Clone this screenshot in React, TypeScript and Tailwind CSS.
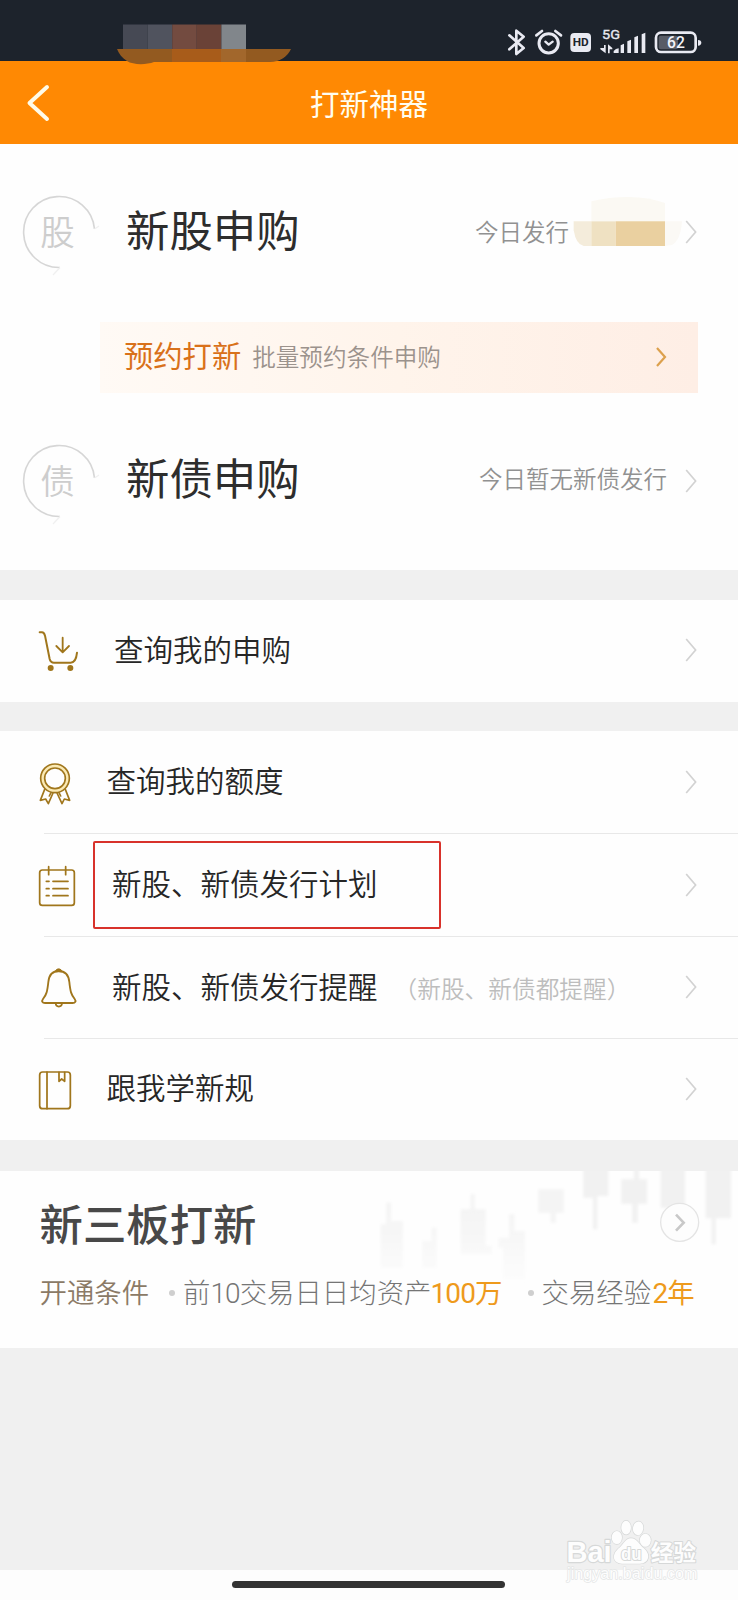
import type { ReactNode } from "react";

const GOLD = "#a0761c";

function Chevron({ className = "text-[#d2d2d2]", small = false }: { className?: string; small?: boolean }) {
  return (
    <svg width="12" height="24" viewBox="0 0 12 24" fill="none" className={`shrink-0 ${className}`}>
      <path d={small ? "M2 3L10 12L2 21" : "M1.2 1L10.6 12L1.2 23"} stroke="currentColor" strokeWidth={small ? 2.2 : 1.7} />
    </svg>
  );
}

function StatusBar() {
  return (
    <div className="relative h-[61px] shrink-0 bg-[#1d232c]">
      <svg width="176" height="42" viewBox="0 0 176 42" className="absolute left-[116px] top-[24px] z-10">
        <rect x="7" y="0.5" width="24.6" height="24.5" fill="#464954" />
        <rect x="31.6" y="0.5" width="24.6" height="24.5" fill="#50535e" />
        <rect x="56.2" y="0.5" width="24.6" height="24.5" fill="#734b40" />
        <rect x="80.8" y="0.5" width="24.6" height="24.5" fill="#6a4237" />
        <rect x="105.4" y="0.5" width="24.6" height="24.5" fill="#81868b" />
        <path d="M1 25H175C172 32 164 38 154 38H38C30 41 17 41 11 37C6 34 3 30 1 25Z" fill="#935a20" />
        <path d="M56 25H105V38H56Z" fill="#a85c1a" />
        <path d="M105 25H130V38H105Z" fill="#a2672c" />
      </svg>
      <svg width="200" height="34" viewBox="0 0 600 102" fill="none" stroke="#e9eaf2" className="absolute left-[505px] top-[26px]">
        <path d="M13 28L56 66L34 84V14L56 32L13 70" strokeWidth="8" strokeLinejoin="round" strokeLinecap="round" />
        <circle cx="131" cy="52" r="29" strokeWidth="9" />
        <path d="M121 47L131 56L143 47" strokeWidth="7" strokeLinecap="round" strokeLinejoin="round" />
        <path d="M94 28L111 15M168 28L151 15" strokeWidth="8" strokeLinecap="round" />
        <rect x="196" y="21" width="62" height="57" rx="12" fill="#e9eaf2" stroke="none" />
        <text x="203" y="61" fontSize="33" fontWeight="700" fontFamily="Roboto, sans-serif" fill="#1d232c" stroke="none" textLength="48" lengthAdjust="spacingAndGlyphs">HD</text>
        <text x="291" y="39" fontSize="41" fontFamily="Roboto, sans-serif" fill="#e9eaf2" stroke="#e9eaf2" strokeWidth="1" textLength="54" lengthAdjust="spacingAndGlyphs">5G</text>
        <g fill="#e9eaf2" stroke="none">
          <path d="M297 57H302V82L286 70V66H297ZM309 82H314V70H322V66L309 55Z" />
          <path d="M326 75Q332 68 341 67V81H326Z" />
          <path d="M347 58L357 53V81H347ZM367 46L378 41V81H367ZM388 34L399 29V81H388ZM410 25L421 20V81H410Z" />
        </g>
        <rect x="453" y="20" width="119" height="58" rx="15" strokeWidth="8" />
        <rect x="461" y="29" width="58" height="41" rx="6" fill="#585c66" stroke="none" />
        <path d="M579 42C586 42 589 46 589 50C589 54 586 59 579 59Z" fill="#e9eaf2" stroke="none" />
        <text x="513" y="66" textAnchor="middle" fontSize="47" fontWeight="500" fontFamily="Roboto, sans-serif" fill="#f4f4fa" stroke="none">62</text>
      </svg>
    </div>
  );
}

function Badge({ label }: { label: string }) {
  return (
    <div className="relative ml-[22px] flex h-[74px] w-[74px] shrink-0 items-center justify-center">
      <svg width="82" height="90" viewBox="0 0 82 90" fill="none" className="absolute left-0 top-0">
        <path d="M72.5 34A35.5 35.5 0 1 0 38 72.5" stroke="#d6d6d6" strokeWidth="1.6" />
        <path d="M72.5 34L77 31M38 72.5L31 80" stroke="#f0f0f0" strokeWidth="1.2" />
      </svg>
      <span className="mb-[3px] mr-[3px] text-[34.5px] font-[350] leading-none text-[#cdcdcd]">{label}</span>
    </div>
  );
}

function CartIcon() {
  return (
    <>
      <path d="M119 636H126C131 636 133 639 135 646L149 716C151 724 155 727 162 727H212C222 727 229 717 231 697" strokeWidth="6" />
      <path d="M188 652V695M169 677L188 696L207 677" strokeWidth="5.5" />
      <circle cx="152" cy="743" r="9" fill={GOLD} stroke="none" />
      <circle cx="211" cy="743" r="9" fill={GOLD} stroke="none" />
    </>
  );
}

function MedalIcon() {
  return (
    <g strokeWidth="5">
      <circle cx="165" cy="158" r="37" stroke="#fbeab4" strokeWidth="10" />
      <circle cx="165" cy="158" r="43" />
      <circle cx="165" cy="158" r="31" />
      <path d="M134 191L121 224L137 220L145 234L159 202M153 201L148 211M196 191L209 224L193 220L186 234L171 202M177 201L182 211" />
    </g>
  );
}

function PlanIcon() {
  return (
    <g strokeWidth="5.2">
      <rect x="119" y="433" width="104" height="106" rx="8" />
      <path d="M146 423V447M197 423V447" />
      <path d="M139 467H147M159 467H204M139 489H147M159 489H204M139 510H147M159 510H204" />
    </g>
  );
}

function BellIcon() {
  return (
    <>
      <path d="M176 106C157 106 147 120 145 139C142 168 139 178 129 190C124 197 127 202 135 202H218C226 202 229 197 224 190C214 178 211 168 208 139C206 120 196 106 176 106Z" strokeWidth="5.6" />
      <path d="M166 107C168 97 184 97 186 107Z" fill={GOLD} strokeWidth="3" />
      <path d="M167 203C167 216 186 216 186 203" strokeWidth="5" />
    </>
  );
}

function BookIcon() {
  return (
    <g strokeWidth="5.2">
      <rect x="119" y="410" width="92" height="110" rx="9" />
      <path d="M141 410V520M177 411V438L185 431L194 438V411" />
    </g>
  );
}

interface RowProps {
  icon: ReactNode;
  box: string;
  label: string;
  gap: string;
  height: string;
  note?: string;
  divider?: boolean;
  marked?: boolean;
}

function Row({ icon, box, label, gap, height, note, divider, marked }: RowProps) {
  return (
    <div className={`relative flex items-center pl-[38px] pr-[41px] ${height}`}>
      <svg width="42" height="44" viewBox={box} fill="none" stroke={GOLD} strokeLinecap="round" strokeLinejoin="round" className="shrink-0">
        {icon}
      </svg>
      <span className={`mb-[5px] whitespace-nowrap text-[29.5px] font-[350] leading-none text-[#262626] ${gap}`}>{label}</span>
      {note && <span className="ml-[16px] mt-px whitespace-nowrap text-[23.7px] font-[350] leading-none text-[#bdbdbd]">{note}</span>}
      <span className="mb-[2px] ml-auto flex">
        <Chevron />
      </span>
      {divider && <div className="absolute bottom-0 left-[44px] right-0 h-px bg-[#e8e8e8]" />}
      {marked && <div className="absolute left-[93px] top-[7px] h-[88px] w-[348px] rounded-[2px] border-2 border-[#d8322b]" />}
    </div>
  );
}

function Candles() {
  return (
    <svg width="369" height="120" viewBox="0 0 1107 360" className="absolute right-0 top-0">
      <defs>
        <filter id="soft" x="-5%" y="-5%" width="110%" height="110%">
          <feGaussianBlur stdDeviation="5" />
        </filter>
        <linearGradient id="fade" x1="0" y1="70" x2="0" y2="325" gradientUnits="userSpaceOnUse">
          <stop offset="0.2" stopColor="#f4f4f4" />
          <stop offset="1" stopColor="#fcfcfc" />
        </linearGradient>
      </defs>
      <g fill="url(#fade)" filter="url(#soft)">
        <path d="M35 160H52V95H66V150H102V290H35ZM160 210H188V170H203V290H160Z" />
        <path d="M388 200H420V130H436V180H468V325H402V230H388Z" />
        <path d="M275 115H305V70H317V115H350V225H368V250H275Z" />
      </g>
      <g fill="#f1f1f1" filter="url(#soft)">
        <path d="M508 55H584V125H560V155H545V125H508Z" fill="#f4f4f4" />
        <path d="M643 -10H718V75H685V175H672V80H643Z" />
        <path d="M757 25H795V-10H810V25H834V98H806V155H790V98H757Z" />
        <path d="M875 -10H948V110H875Z" />
        <path d="M1010 -10H1086V142H1040V220H1028V142H1010Z" />
      </g>
      <circle cx="932" cy="154" r="57" fill="#fdfdfd" stroke="#e4e4e4" strokeWidth="4" />
      <path d="M921 131L944 155L921 179" fill="none" stroke="#c8c8c8" strokeWidth="8" />
    </svg>
  );
}

function Watermark() {
  return (
    <svg width="138" height="70" viewBox="0 0 402 204" className="absolute left-[565px] top-[1517px]">
      <g stroke="#d6d8d8" fill="#fdfdfd" paintOrder="stroke" strokeLinejoin="round">
        <text x="4" y="132" fontSize="88" fontWeight="700" fontFamily="Liberation Sans, sans-serif" strokeWidth="7" textLength="132" lengthAdjust="spacingAndGlyphs">Bai</text>
        <g strokeWidth="4">
          <ellipse cx="151" cy="60" rx="15" ry="19" />
          <ellipse cx="178" cy="31" rx="14" ry="20" />
          <ellipse cx="213" cy="33" rx="15" ry="20" transform="rotate(8 213 33)" />
          <ellipse cx="234" cy="68" rx="16" ry="19" />
          <path d="M192 62C210 62 214 78 226 88C252 106 246 135 218 136H166C138 134 134 108 160 88C172 78 176 62 192 62Z" />
        </g>
        <text x="193" y="125" textAnchor="middle" fontSize="52" fontWeight="700" fontFamily="Liberation Sans, sans-serif" textLength="60" lengthAdjust="spacingAndGlyphs" strokeWidth="6">du</text>
        <text x="250" y="129" fontSize="66" fontWeight="700" fontFamily="Noto Sans CJK SC, sans-serif" strokeWidth="6">经验</text>
        <text x="6" y="182" fontSize="46" fontFamily="Liberation Sans, sans-serif" stroke="#e3e5e5" strokeWidth="4" textLength="380" lengthAdjust="spacingAndGlyphs">jingyan.baidu.com</text>
      </g>
    </svg>
  );
}

function Digits({ children }: { children: ReactNode }) {
  return <span className="font-[Roboto] text-[28px] tracking-[-0.9px]">{children}</span>;
}

export default function App() {
  return (
    <div className="relative flex h-[1600px] w-[738px] flex-col overflow-hidden bg-[#f0f0f0] font-['Noto_Sans_CJK_SC',sans-serif]">
      <StatusBar />
      <header className="relative flex h-[83px] shrink-0 items-center justify-center bg-[#ff8903]">
        <svg width="24" height="40" viewBox="0 0 24 40" fill="none" className="absolute left-[26px] top-[22px]">
          <path d="M21 4L3.5 20L21 36" stroke="#fffbe8" strokeWidth="4" strokeLinecap="round" strokeLinejoin="round" />
        </svg>
        <h1 className="text-[29.5px] font-normal leading-none text-[#fffdf0]">打新神器</h1>
      </header>

      <section className="h-[426px] shrink-0 bg-[#fefefe]">
        <div className="flex h-[175px] items-center pr-[41px]">
          <Badge label="股" />
          <span className="mb-[5px] ml-[30px] text-[43.4px] leading-none text-[#2d2d2d]">新股申购</span>
          <span className="ml-auto mr-[3px] text-[23.5px] font-[350] leading-none text-[#919191]">今日发行</span>
          <svg width="110" height="50" viewBox="0 0 330 150" className="-mt-[20px] mr-[3px] shrink-0">
            <path d="M58 13Q110 0 170 0Q230 0 279 18V73H58Z" fill="#fbf9f3" />
            <path d="M5 73H58V147H35Q12 143 5 100Z" fill="#f4ecdb" />
            <path d="M58 73H131V147H58Z" fill="#efe1c2" />
            <path d="M131 73H279V147H131Z" fill="#ead0a0" />
            <path d="M279 73H330Q326 130 300 144L279 147Z" fill="#fbf9f5" />
          </svg>
          <Chevron />
        </div>
        <div className="ml-[100px] mt-[3px] flex h-[71px] w-[598px] items-center bg-linear-to-r from-[#fffaf5] via-[#fff4eb] to-[#feeee5] pl-[24px] pr-[31px]">
          <span className="mb-[5px] text-[29.3px] leading-none text-[#d9711a]">预约打新</span>
          <span className="mb-px ml-[11px] text-[23.6px] font-[350] leading-none text-[#9b928c]">批量预约条件申购</span>
          <span className="mb-[2px] ml-auto flex">
            <Chevron small className="text-[#dca04d]" />
          </span>
        </div>
        <div className="flex h-[175px] items-center pr-[41px]">
          <Badge label="债" />
          <span className="mb-[7px] ml-[30px] text-[43.4px] leading-none text-[#2d2d2d]">新债申购</span>
          <span className="mb-[3px] ml-auto mr-[18px] text-[23.5px] font-[350] leading-none text-[#919191]">今日暂无新债发行</span>
          <Chevron />
        </div>
      </section>

      <section className="mt-[30px] h-[102px] shrink-0 bg-[#fefefe]">
        <Row icon={<CartIcon />} box="114 626 126 132" label="查询我的申购" gap="ml-[34px]" height="h-[102px]" />
      </section>

      <section className="mt-[29px] h-[409px] shrink-0 bg-[#fefefe]">
        <Row icon={<MedalIcon />} box="114 106 126 132" label="查询我的额度" gap="ml-[26.5px]" height="h-[103px]" divider />
        <Row icon={<PlanIcon />} box="114 415 126 132" label="新股、新债发行计划" gap="ml-[32px]" height="h-[103px]" divider marked />
        <Row icon={<BellIcon />} box="114 91 126 132" label="新股、新债发行提醒" gap="ml-[32px]" height="h-[102px]" note="（新股、新债都提醒）" divider />
        <Row icon={<BookIcon />} box="114 398 126 132" label="跟我学新规" gap="ml-[26.5px]" height="h-[101px]" />
      </section>

      <section className="relative mt-[31px] flex h-[177px] shrink-0 flex-col bg-[#fefefe] pl-[39.5px] pt-[29px]">
        <Candles />
        <h2 className="relative text-[43.4px] font-medium leading-[44px] text-[#484848]">新三板打新</h2>
        <div className="relative mt-[32px] flex items-baseline whitespace-nowrap text-[27.4px] font-light leading-[30px] text-[#757575]">
          <span className="w-[129.5px] font-[350] text-[#8b7a66]">开通条件</span>
          <span className="mr-[8px] size-[6px] -translate-y-[7px] rounded-full bg-[#cfcfcf]" />
          <span className="w-[247.5px]">
            前<Digits>10</Digits>交易日日均资产
          </span>
          <span className="w-[97px] font-normal text-[#ee9a1c]">
            <Digits>100</Digits>万
          </span>
          <span className="mr-[8px] size-[6px] -translate-y-[7px] rounded-full bg-[#cfcfcf]" />
          <span className="w-[111px]">交易经验</span>
          <span className="font-normal text-[#ee9a1c]">
            <Digits>2</Digits>年
          </span>
        </div>
      </section>

      <footer className="mt-auto flex h-[30px] shrink-0 items-center justify-center bg-[#fdfdfd] pb-px pr-[2px]">
        <div className="h-[7px] w-[273px] rounded-full bg-[#333333]" />
      </footer>
      <Watermark />
    </div>
  );
}
